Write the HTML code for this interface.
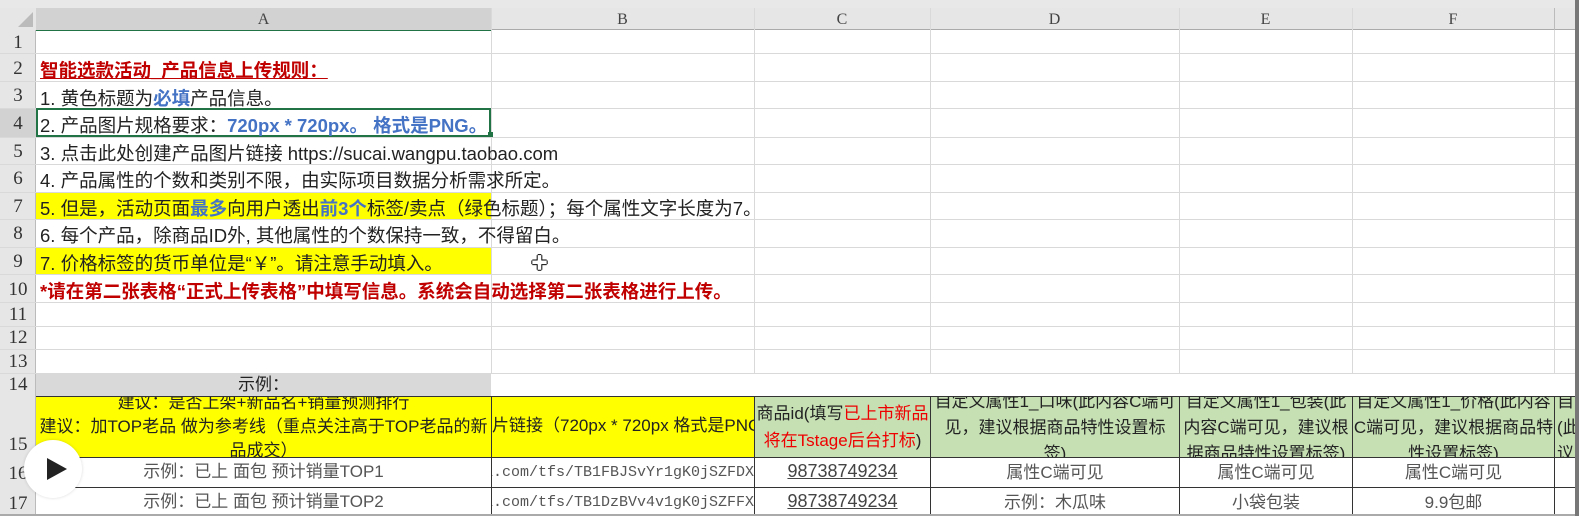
<!DOCTYPE html>
<html><head><meta charset="utf-8"><style>
*{margin:0;padding:0;box-sizing:border-box}
body{width:1579px;height:516px;overflow:hidden;background:#fff;position:relative;font-family:"Liberation Sans","Noto Sans CJK SC",sans-serif;color:#222}
.a{position:absolute}
.hl{position:absolute;left:0;width:1575px;height:1px;background:#d9d9d9}
.vl{position:absolute;top:8px;width:1px;height:508px;background:#d9d9d9}
.rn{position:absolute;left:0;width:36px;text-align:center;font-family:"Liberation Serif",serif;font-size:19px;color:#333}
.t{position:absolute;left:40px;font-size:18.5px;white-space:nowrap}
.ch{position:absolute;top:8px;height:22px;line-height:24px;text-align:center;font-family:"Liberation Serif",serif;font-size:16px;color:#444}
.c{position:absolute;text-align:center;overflow:hidden;font-size:17px;line-height:25px}
.h{position:absolute;top:397px;height:60px;overflow:hidden}
.h div{position:absolute;left:-20px;right:-20px;top:-8px;text-align:center;font-size:17px;line-height:26px;white-space:nowrap}
</style></head><body>
<div class="a" style="left:0;top:0;width:1579px;height:8px;background:#e8e8e8"></div>
<div class="a" style="left:0;top:8px;width:1575px;height:22px;background:#e6e6e6;border-bottom:1px solid #aaa"></div>
<div class="a" style="left:36px;top:29px;width:455px;height:2px;background:#217346"></div>
<div class="a" style="left:0;top:30px;width:36px;height:486px;background:#e6e6e6;border-right:1px solid #bbb"></div>
<div class="a" style="left:0;top:108px;width:36px;height:29px;background:#d2d2d2"></div>
<div class="a" style="left:36px;top:8px;width:455px;height:22px;background:#d2d2d2"></div>
<div class="a" style="left:1575px;top:0;width:4px;height:516px;background:#777"></div>
<div class="a" style="left:36px;top:192px;width:455px;height:27px;background:#ffff00"></div>
<div class="a" style="left:36px;top:247px;width:455px;height:27px;background:#ffff00"></div>
<div class="a" style="left:36px;top:373px;width:455px;height:24px;background:#d9d9d9"></div>
<div class="a" style="left:36px;top:397px;width:718px;height:60px;background:#ffff00"></div>
<div class="a" style="left:754px;top:397px;width:821px;height:60px;background:#c6e0b4"></div>
<div class="hl" style="top:53px"></div><div class="hl" style="top:81px"></div><div class="hl" style="top:108px"></div><div class="hl" style="top:137px"></div><div class="hl" style="top:164px"></div><div class="hl" style="top:192px"></div><div class="hl" style="top:219px"></div><div class="hl" style="top:247px"></div><div class="hl" style="top:274px"></div><div class="hl" style="top:302px"></div><div class="hl" style="top:326px"></div><div class="hl" style="top:349px"></div><div class="hl" style="top:373px"></div>
<div class="vl" style="left:491px;height:365px"></div><div class="vl" style="left:754px;height:365px"></div><div class="vl" style="left:930px;height:365px"></div><div class="vl" style="left:1179px;height:365px"></div><div class="vl" style="left:1352px;height:365px"></div><div class="vl" style="left:1554px;height:365px"></div>
<div class="a" style="left:36px;top:396px;width:1539px;height:1px;background:#333"></div>
<div class="a" style="left:36px;top:457px;width:1539px;height:1px;background:#333"></div>
<div class="a" style="left:36px;top:487px;width:1539px;height:1px;background:#333"></div>
<div class="a" style="left:491px;top:396px;width:1px;height:120px;background:#333"></div>
<div class="a" style="left:754px;top:396px;width:1px;height:120px;background:#333"></div>
<div class="a" style="left:930px;top:396px;width:1px;height:120px;background:#333"></div>
<div class="a" style="left:1179px;top:396px;width:1px;height:120px;background:#333"></div>
<div class="a" style="left:1352px;top:396px;width:1px;height:120px;background:#333"></div>
<div class="a" style="left:1554px;top:396px;width:1px;height:120px;background:#333"></div>
<div class="ch" style="left:36px;width:455px">A</div><div class="ch" style="left:491px;width:263px">B</div><div class="ch" style="left:754px;width:176px">C</div><div class="ch" style="left:930px;width:249px">D</div><div class="ch" style="left:1179px;width:173px">E</div><div class="ch" style="left:1352px;width:202px">F</div>
<div class="a" style="left:1554px;top:8px;width:1px;height:22px;background:#bbb"></div>
<div class="a" style="left:0;top:8px;width:36px;height:22px;background:#e6e6e6"></div>
<div class="a" style="left:18px;top:12px;width:0;height:0;border-left:15px solid transparent;border-bottom:15px solid #bbb"></div>
<div class="rn" style="top:32px">1</div><div class="rn" style="top:58px">2</div><div class="rn" style="top:85px">3</div><div class="rn" style="top:113px">4</div><div class="rn" style="top:141px">5</div><div class="rn" style="top:168px">6</div><div class="rn" style="top:196px">7</div><div class="rn" style="top:223px">8</div><div class="rn" style="top:251px">9</div><div class="rn" style="top:279px">10</div><div class="rn" style="top:304px">11</div><div class="rn" style="top:327px">12</div><div class="rn" style="top:351px">13</div><div class="rn" style="top:374px">14</div><div class="rn" style="top:434px">15</div><div class="rn" style="top:463px">16</div><div class="rn" style="top:493px">17</div>
<div class="t" style="top:57px;color:#c00000;font-weight:bold;text-decoration:underline">智能选款活动_产品信息上传规则：</div>
<div class="t" style="top:85px">1. 黄色标题为<b style="color:#4472c4">必填</b>产品信息。</div>
<div class="a" style="left:36px;top:108px;width:455px;height:29px;border:2px solid #217346"></div>
<div class="a" style="left:488px;top:132px;width:5px;height:5px;background:#217346"></div>
<div class="t" style="top:112px">2. 产品图片规格要求：<b style="color:#4472c4">720px * 720px。 格式是PNG。</b></div>
<div class="t" style="top:140px">3. 点击此处创建产品图片链接 https://sucai.wangpu.taobao.com</div>
<div class="t" style="top:167px">4. 产品属性的个数和类别不限，由实际项目数据分析需求所定。</div>
<div class="t" style="top:195px">5. 但是，活动页面<b style="color:#4472c4">最多</b>向用户透出<b style="color:#4472c4">前3个</b>标签/卖点（绿色标题）；每个属性文字长度为7。</div>
<div class="t" style="top:222px">6. 每个产品，除商品ID外, 其他属性的个数保持一致，不得留白。</div>
<div class="t" style="top:250px">7. 价格标签的货币单位是“￥”。请注意手动填入。</div>
<div class="a" style="left:531px;top:249px;font-size:17px;color:#fff;text-shadow:0 0 1px #000,0 0 1px #000,1px 0 0 #000,-1px 0 0 #000,0 1px 0 #000,0 -1px 0 #000">✚</div>
<div class="t" style="top:278px;color:#c00000;font-weight:bold">*请在第二张表格“正式上传表格”中填写信息。系统会自动选择第二张表格进行上传。</div>
<div class="c" style="left:36px;top:373px;width:455px;font-size:17px;line-height:24px">示例：</div>
<div class="h" style="left:36px;width:455px"><div style="top:-6px;line-height:24px">建议：是否上架+新品名+销量预测排行<br>建议：加TOP老品 做为参考线（重点关注高于TOP老品的新<br>品成交）</div></div>
<div class="c" style="left:492px;top:414px;width:262px;font-size:17px;white-space:nowrap;text-align:left;line-height:24px">片链接（720px * 720px 格式是PNG</div>
<div class="h" style="left:755px;width:175px"><div style="top:3px;line-height:27px">商品id(填写<span style="color:#e00">已上市新品</span><br><span style="color:#e00">将在Tstage后台打标</span>)</div></div>
<div class="h" style="left:931px;width:248px"><div>自定义属性1_口味(此内容C端可<br>见，建议根据商品特性设置标<br>签)</div></div>
<div class="h" style="left:1180px;width:172px"><div>自定义属性1_包装(此<br>内容C端可见，建议根<br>据商品特性设置标签)</div></div>
<div class="h" style="left:1353px;width:201px"><div>自定义属性1_价格(此内容<br>C端可见，建议根据商品特<br>性设置标签)</div></div>
<div class="h" style="left:1555px;width:20px"><div style="left:2px;right:auto;text-align:left">自<br>(此<br>议</div></div>
<div class="c" style="left:36px;top:459px;width:455px;color:#555">示例：已上 面包 预计销量TOP1</div>
<div class="c" style="left:36px;top:489px;width:455px;color:#555">示例：已上 面包 预计销量TOP2</div>
<div class="c" style="left:492px;top:460px;width:262px;text-align:left;font-family:'Liberation Mono',monospace;font-size:15px;color:#555;white-space:nowrap;text-indent:-8px">a.com/tfs/TB1FBJSvYr1gK0jSZFDXXb9</div>
<div class="c" style="left:492px;top:490px;width:262px;text-align:left;font-family:'Liberation Mono',monospace;font-size:15px;color:#555;white-space:nowrap;text-indent:-8px">a.com/tfs/TB1DzBVv4v1gK0jSZFFXXb9</div>
<div class="c" style="left:755px;top:459px;width:175px;font-size:18px;text-decoration:underline;color:#444">98738749234</div>
<div class="c" style="left:755px;top:489px;width:175px;font-size:18px;text-decoration:underline;color:#444">98738749234</div>
<div class="c" style="left:931px;top:460px;width:248px;color:#555">属性C端可见</div>
<div class="c" style="left:1180px;top:460px;width:172px;color:#555">属性C端可见</div>
<div class="c" style="left:1353px;top:460px;width:201px;color:#555">属性C端可见</div>
<div class="c" style="left:931px;top:490px;width:248px;color:#555">示例：木瓜味</div>
<div class="c" style="left:1180px;top:490px;width:172px;color:#555">小袋包装</div>
<div class="c" style="left:1353px;top:490px;width:201px;color:#555">9.9包邮</div>
<div class="a" style="left:0;top:514px;width:1575px;height:2px;background:#aaa"></div>
<div class="a" style="left:24px;top:440px;width:58px;height:58px;border-radius:50%;background:#fff;box-shadow:0 0 3px rgba(0,0,0,.15)"></div>
<div class="a" style="left:47px;top:458px;width:0;height:0;border-top:11px solid transparent;border-bottom:11px solid transparent;border-left:20px solid #222"></div>
</body></html>
